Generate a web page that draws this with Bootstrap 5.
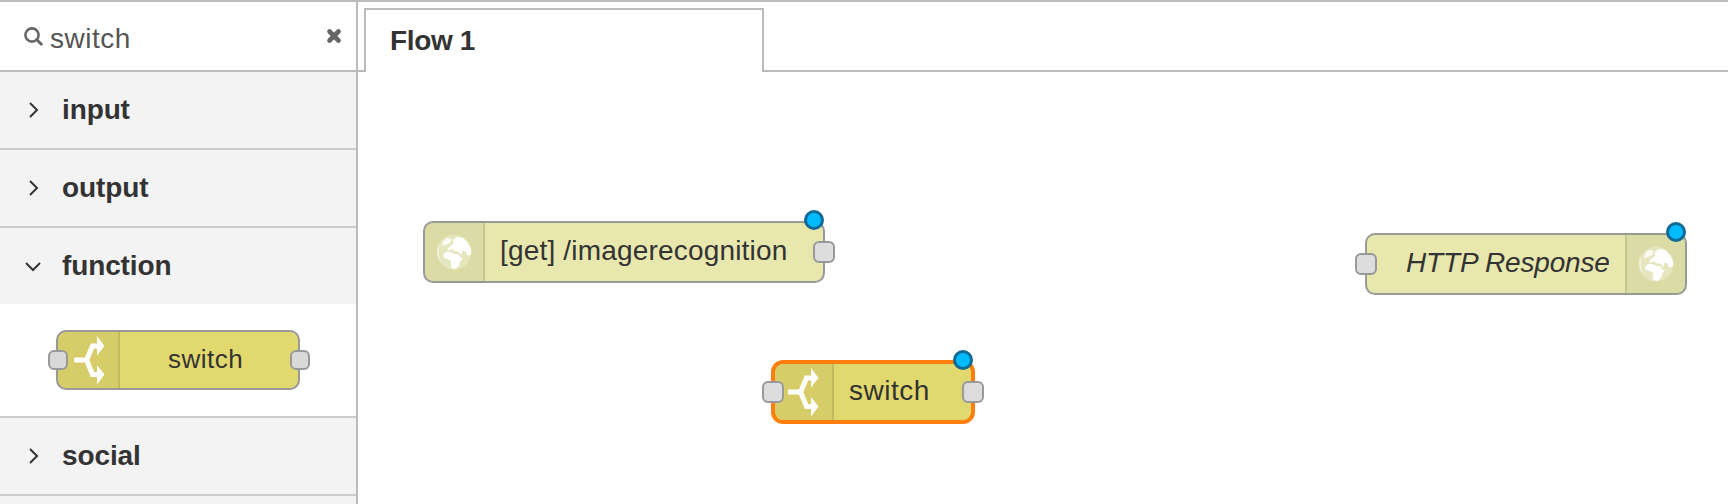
<!DOCTYPE html>
<html lang="en">
<head>
<meta charset="utf-8">
<title>Flow 1</title>
<link href="https://cdn.jsdelivr.net/npm/bootstrap@5.3.0/dist/css/bootstrap.min.css" rel="stylesheet">
<style>
  body { font-family: "Liberation Sans", Arial, sans-serif; font-size: 28px; line-height: 34px; color: #333; background: #fff; height: 504px; overflow: hidden; }
  .editor { height: 504px; border-top: 2px solid #bbb; }
  .palette { width: 358px; border-right: 2px solid #bbb; }
  .search-bar { height: 70px; border-bottom: 2px solid #bbb; color: #555; padding: 0 14px 0 24px; }
  .search-text { letter-spacing: .5px; margin-left: 7px; padding-top: 5px; }
  .category { height: 78px; background: #f3f3f3; border-bottom: 2px solid #ccc; padding-left: 24px; font-weight: 700; letter-spacing: -.12px; }
  .category.is-open { height: 76px; border-bottom: 0; }
  .category svg { width: 18px; height: 18px; margin-right: 20px; }
  .category-body { height: 114px; border-bottom: 2px solid #ccc; padding: 26px 0 0 56px; }
  .tab-strip { height: 70px; padding-top: 6px; }
  .tab-gap { border-bottom: 2px solid #bbb; }
  .flow-tab { width: 400px; border: 2px solid #bbb; border-bottom: 0; padding: 0 0 1px 24px; font-weight: 700; letter-spacing: -.35px; }
  .flow-node { position: relative; display: flex; border: 2px solid #999; border-radius: 10px; background: #e7e7ae; width: 402px; height: 62px; }
  .flow-node.placed { position: absolute; }
  .flow-node.logic { background: #e2d96e; }
  .flow-node.in-palette { width: 244px; height: 60px; font-size: 26px; }
  .flow-node.chosen { border: 4px solid #ff7f0e; width: 204px; height: 64px; border-radius: 12px; }
  .node-icon { flex: none; width: 60px; background: rgba(0,0,0,.05); border-right: 2px solid rgba(0,0,0,.1); border-radius: 8px 0 0 8px; }
  .node-icon.at-end { border-right: 0; border-left: 2px solid rgba(0,0,0,.1); border-radius: 0 8px 8px 0; }
  .node-icon svg { display: block; width: 100%; height: 100%; overflow: visible; }
  .node-label { flex: 1; white-space: nowrap; display: flex; align-items: center; padding-bottom: 3px; letter-spacing: .18px; }
  .logic .node-label { letter-spacing: .5px; }
  .port { position: absolute; width: 22px; height: 22px; border: 2px solid #999; border-radius: 6px; background: #ddd; top: 18px; }
  .in-palette .port { width: 20px; height: 20px; background: #d9d9d9; }
  .changed { position: absolute; width: 20px; height: 20px; border-radius: 50%; border: 3px solid #0f6a96; background: #00bcff; }
</style>
</head>
<body>
<svg width="0" height="0" class="position-absolute" aria-hidden="true">
  <defs>
    <filter id="soft" x="-10%" y="-10%" width="120%" height="120%"><feGaussianBlur stdDeviation=".6"/></filter>
    <symbol id="globe" viewBox="0 0 36 36">
      <circle cx="18" cy="18" r="17.5" fill="#fff" fill-opacity=".28"/>
      <g fill="#fff" filter="url(#soft)">
        <path d="M6 12 7 7 11 4 16 5 14 9 10 11Z" opacity=".85"/>
        <path d="M11 16 14 12 17 10 17 6 21 3 27 4 32 9 35 15 35 20 32 22 29 17 26 17 26 21 23 18 18 17 16 15 12 17Z"/>
        <path d="M7 21 10 18 15 18 18 20 22 20 25 24 27 24 24 28 23 32 19 35 15 34 15 27 12 25 8 24Z"/>
        <path d="M1 14 3 12 3 20 5 27 2 23Z" opacity=".5"/>
      </g>
    </symbol>
    <symbol id="fork" viewBox="0 0 60 60">
      <g filter="url(#soft)">
        <path d="M16 30H29M28 31.5 34.5 16H40M28 28.500 34.5 44.500H40" fill="none" stroke="#fff" stroke-width="5"/>
        <path d="M39 6 46.500 16 39 25.500ZM39 35 46.500 44.500 39 54.500Z" fill="#fff"/>
      </g>
    </symbol>
  </defs>
</svg>
<div class="editor d-flex overflow-hidden">
  <aside class="palette flex-shrink-0">
    <div class="search-bar d-flex align-items-center">
      <svg width="19" height="19" viewBox="0 0 19 19" class="flex-shrink-0"><circle cx="8" cy="8" r="6.6" fill="none" stroke="#666" stroke-width="2.6"/><path d="M12.8 12.8 17.3 17.3" stroke="#666" stroke-width="2.8" stroke-linecap="round"/></svg>
      <span class="search-text flex-grow-1">switch</span>
      <svg width="16" height="16" viewBox="0 0 16 16"><path d="M3.500 3.500 12.500 12.500M12.500 3.500 3.500 12.500" stroke="#666" stroke-width="4.600" stroke-linecap="round"/></svg>
    </div>
    <div class="category d-flex align-items-center"><svg viewBox="0 0 18 18"><path d="M6 2 13 9 6 16" fill="none" stroke="#333" stroke-width="2"/></svg>input</div>
    <div class="category d-flex align-items-center"><svg viewBox="0 0 18 18"><path d="M6 2 13 9 6 16" fill="none" stroke="#333" stroke-width="2"/></svg>output</div>
    <div class="category is-open d-flex align-items-center"><svg viewBox="0 0 18 18"><path d="M2 6 9 13 16 6" fill="none" stroke="#333" stroke-width="2"/></svg>function</div>
    <div class="category-body">
      <div class="flow-node logic in-palette">
        <div class="node-icon" style="width:62px"><svg viewBox="0 0 60 56"><use href="#fork" x="0" y="-2" width="60" height="60"/></svg></div>
        <span class="node-label" style="padding-left:48px">switch</span>
        <i class="port" style="left:-10px"></i><i class="port" style="right:-12px"></i>
      </div>
    </div>
    <div class="category d-flex align-items-center"><svg viewBox="0 0 18 18"><path d="M6 2 13 9 6 16" fill="none" stroke="#333" stroke-width="2"/></svg>social</div>
    <div class="category"></div>
  </aside>
  <main class="flex-grow-1 position-relative">
    <div class="tab-strip d-flex">
      <div class="tab-gap" style="width:6px"></div>
      <div class="flow-tab d-flex align-items-center">Flow 1</div>
      <div class="tab-gap flex-grow-1"></div>
    </div>
    <!-- Nodes sit at their coordinates on the free canvas -->
    <div class="flow-node placed" style="left:65px;top:219px">
      <div class="node-icon"><svg viewBox="0 0 58 58"><use href="#globe" x="11" y="11" width="36" height="36"/></svg></div>
      <span class="node-label" style="padding-left:15px">[get] /imagerecognition</span>
      <i class="port" style="right:-12px"></i><i class="changed" style="right:-1px;top:-13px"></i>
    </div>
    <div class="flow-node placed" style="left:1007px;top:231px;width:322px">
      <span class="node-label fst-italic" style="padding-left:39px;letter-spacing:-.17px">HTTP Response</span>
      <div class="node-icon at-end"><svg viewBox="0 0 58 58"><use href="#globe" x="11" y="11" width="36" height="36"/></svg></div>
      <i class="port" style="left:-12px"></i><i class="changed" style="right:-1px;top:-13px"></i>
    </div>
    <div class="flow-node placed logic chosen" style="left:413px;top:358px">
      <div class="node-icon" style="width:59px"><svg viewBox="0 0 57 56"><use href="#fork" x="-3" y="-2" width="60" height="60"/></svg></div>
      <span class="node-label" style="padding-left:15px">switch</span>
      <i class="port" style="left:-13px;top:17px"></i><i class="port" style="right:-13px;top:17px"></i><i class="changed" style="right:-2px;top:-14px"></i>
    </div>
  </main>
</div>
<script src="https://cdn.jsdelivr.net/npm/bootstrap@5.3.0/dist/js/bootstrap.bundle.min.js"></script>
</body>
</html>
